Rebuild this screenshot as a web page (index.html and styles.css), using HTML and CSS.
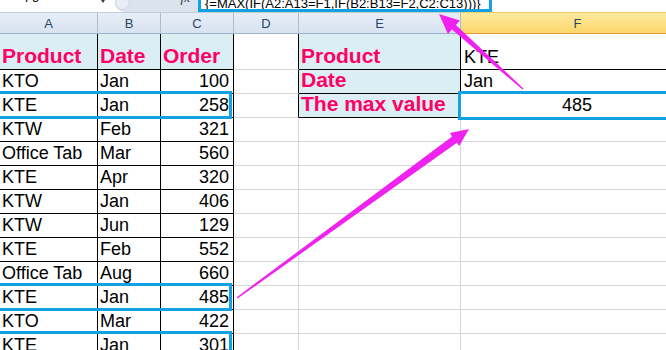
FILE: index.html
```html
<!DOCTYPE html>
<html>
<head>
<meta charset="utf-8">
<link rel="stylesheet" href="styles.css">
</head>
<body>
<div class="app">
  <div class="formula-bar">
    <div class="name-box"><span class="name-text">F3</span><span class="nb-arrow"></span></div>
    <div class="fx-area"><span class="fx-knob"></span><span class="fx">fx</span></div>
    <div class="formula-input"><span class="formula-text">{=MAX(IF(A2:A13=F1,IF(B2:B13=F2,C2:C13)))}</span></div>
    <div class="formula-rest"></div>
  </div>
  <div class="sheet">
    <div class="col-head">A</div>
    <div class="col-head">B</div>
    <div class="col-head">C</div>
    <div class="col-head">D</div>
    <div class="col-head">E</div>
    <div class="col-head sel">F</div>

    <div class="cell t hd top">Product</div>
    <div class="cell t hd top">Date</div>
    <div class="cell t hd top">Order</div>
    <div class="cell edge"></div>
    <div class="cell t hd top">Product</div>
    <div class="cell t fcol">KTE</div>

    <div class="cell t">KTO</div>
    <div class="cell t">Jan</div>
    <div class="cell t num">100</div>
    <div class="cell edge"></div>
    <div class="cell t hd">Date</div>
    <div class="cell t fcol">Jan</div>

    <div class="cell t">KTE</div>
    <div class="cell t">Jan</div>
    <div class="cell t num">258</div>
    <div class="cell edge"></div>
    <div class="cell t hd">The max value</div>
    <div class="cell t ctr">485</div>

    <div class="cell t">KTW</div><div class="cell t">Feb</div><div class="cell t num">321</div><div class="cell"></div><div class="cell"></div><div class="cell"></div>
    <div class="cell t">Office Tab</div><div class="cell t">Mar</div><div class="cell t num">560</div><div class="cell"></div><div class="cell"></div><div class="cell"></div>
    <div class="cell t">KTE</div><div class="cell t">Apr</div><div class="cell t num">320</div><div class="cell"></div><div class="cell"></div><div class="cell"></div>
    <div class="cell t">KTW</div><div class="cell t">Jan</div><div class="cell t num">406</div><div class="cell"></div><div class="cell"></div><div class="cell"></div>
    <div class="cell t">KTW</div><div class="cell t">Jun</div><div class="cell t num">129</div><div class="cell"></div><div class="cell"></div><div class="cell"></div>
    <div class="cell t">KTE</div><div class="cell t">Feb</div><div class="cell t num">552</div><div class="cell"></div><div class="cell"></div><div class="cell"></div>
    <div class="cell t">Office Tab</div><div class="cell t">Aug</div><div class="cell t num">660</div><div class="cell"></div><div class="cell"></div><div class="cell"></div>
    <div class="cell t">KTE</div><div class="cell t">Jan</div><div class="cell t num">485</div><div class="cell"></div><div class="cell"></div><div class="cell"></div>
    <div class="cell t">KTO</div><div class="cell t">Mar</div><div class="cell t num">422</div><div class="cell"></div><div class="cell"></div><div class="cell"></div>
    <div class="cell t">KTE</div><div class="cell t">Jan</div><div class="cell t num">301</div><div class="cell"></div><div class="cell"></div><div class="cell"></div>
  </div>

  <div class="mark m-row3"></div>
  <div class="mark m-row11"></div>
  <div class="mark m-row13"></div>
  <div class="mark m-f3"></div>

  <svg class="arrows" width="666" height="350" viewBox="0 0 666 350">
    <polygon fill="#ef22ef" points="469,129 459.2,146.1 456.9,142.8 237.5,298.6 236.5,297.4 452.1,136.4 449.8,133.1"/>
    <polygon fill="#ef22ef" points="439,14 447.9,34.0 451.9,29.5 522.5,89.5 523.5,88.5 455.9,25.1 459.9,20.6"/>
  </svg>
</div>
</body>
</html>
```

FILE: styles.css
```css
* { box-sizing: border-box; }
html, body { margin: 0; padding: 0; background: #ffffff; }
body {
  width: 666px;
  height: 350px;
  overflow: hidden;
  font-family: "Liberation Sans", Arial, sans-serif;
}
.app {
  position: relative;
  width: 666px;
  height: 350px;
  overflow: hidden;
}

/* formula bar */
.formula-bar {
  display: flex;
  height: 12px;
  background: #ffffff;
  overflow: hidden;
}
.name-box {
  width: 115px;
  display: flex;
  align-items: flex-start;
}
.name-text {
  width: 76px;
  margin-left: 25px;
  margin-top: -8px;
  font-size: 12px;
  line-height: 12px;
  color: #000;
}
.nb-arrow {
  width: 0;
  height: 0;
  border-left: 2px solid transparent;
  border-right: 2px solid transparent;
  border-top: 3px solid #3a3a3a;
}
.fx-area {
  width: 83px;
  display: flex;
  align-items: flex-start;
  background: #dae3ee;
  border-bottom-left-radius: 9px;
}
.fx-knob {
  width: 15px;
  height: 15px;
  margin-top: -5px;
  border-radius: 50%;
  background: #e9eef6;
  border: 1px solid #cdd7e4;
  margin-right: auto;
}
.fx {
  margin-right: 8px;
  margin-top: -8px;
  font-family: "Liberation Serif", "Times New Roman", serif;
  font-style: italic;
  font-size: 13px;
  line-height: 12px;
  color: #333;
}
.formula-input {
  width: 294px;
  height: 12px;
  display: flex;
  align-items: flex-end;
  padding-left: 4px;
  border: 3px solid #12a1e3;
  border-top: 0;
  background: #fff;
  overflow: hidden;
}
.formula-text {
  font-size: 13px;
  line-height: 10px;
  color: #000;
  white-space: nowrap;
}
.formula-rest { flex: 1; }

/* sheet */
.sheet {
  display: grid;
  width: 695px;
  grid-template-columns: 98px 63px 73px 65px 162px 234px;
  grid-template-rows: 22px 36px repeat(12, 24px);
}
.col-head {
  border-top: 1px solid #c3cedc;
  border-bottom: 1px solid #9eb3cb;
  border-right: 1px solid #a9bcd2;
  background: linear-gradient(#e6edf7, #d8e3f0);
  text-align: center;
  font-size: 13px;
  line-height: 19px;
  padding-top: 1px;
  color: #27466b;
}
.col-head.sel {
  background: linear-gradient(#feea9f, #fbd66b);
  border-top-color: #f0cc6a;
  border-bottom: 1px solid #e09a35;
  border-right-color: #d0a659;
  color: #2a4763;
}

.cell {
  display: flex;
  align-items: flex-end;
  padding: 0 3px 2px 2px;
  border-right: 1px solid #d6d6d6;
  border-bottom: 1px solid #d6d6d6;
  font-size: 18px;
  line-height: 20px;
  color: #000;
  white-space: nowrap;
  overflow: hidden;
}
.cell.t {
  border-right-color: #000;
  border-bottom-color: #000;
}
.cell.edge { border-right-color: #000; }
.cell.hd {
  background: #daeef3;
  color: #ff0066;
  font-weight: bold;
  font-size: 21px;
  line-height: 24px;
  padding-bottom: 1px;
}
.cell.num { justify-content: flex-end; padding-right: 4px; }
.cell.ctr { justify-content: center; }
.cell.fcol { padding-left: 3px; }

/* highlight marks */
.mark {
  position: absolute;
  border: 3px solid #12a1e3;
}
.m-row3 { left: -3px; top: 91px; width: 235px; height: 28px; }
.m-row11 { left: -3px; top: 283px; width: 235px; height: 28px; }
.m-row13 { left: -3px; top: 331px; width: 235px; height: 40px; }
.m-f3 { left: 458px; top: 91px; width: 260px; height: 29px; }

.arrows {
  position: absolute;
  left: 0;
  top: 0;
  pointer-events: none;
}
```
